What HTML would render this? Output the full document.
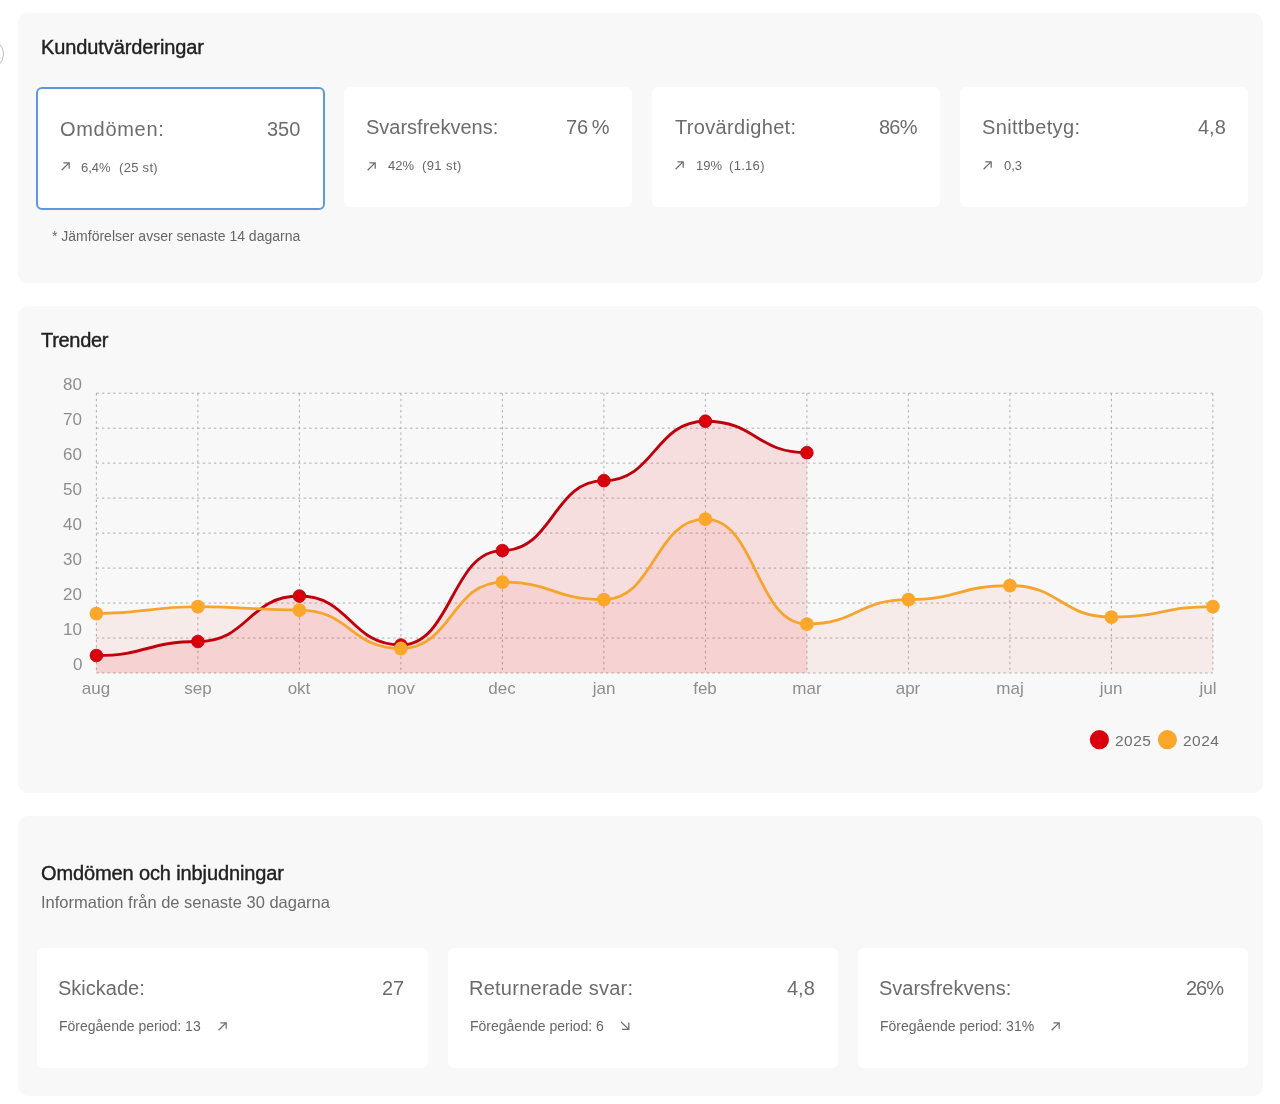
<!DOCTYPE html>
<html><head><meta charset="utf-8">
<style>
html,body{margin:0;padding:0;background:#fff;}
body{width:1280px;height:1104px;overflow:hidden;position:relative;font-family:"Liberation Sans",sans-serif;}
.p{position:absolute;left:18px;width:1245px;background:#f8f8f8;border-radius:10px;}
.c{position:absolute;background:#fff;border-radius:6px;box-sizing:border-box;}
.t{position:absolute;white-space:nowrap;line-height:1;will-change:transform;}
.h{font-size:20px;color:#212121;left:40.8px;-webkit-text-stroke:0.4px #212121;}
.ti{font-size:20px;color:#6c6c6c;}
.va{font-size:20px;color:#6c6c6c;text-align:right;}
.s{font-size:13px;color:#666;}
.s2{font-size:14px;color:#666;}
.ar{position:absolute;}
.chart{position:absolute;left:0;top:0;}
.xl{position:absolute;will-change:transform;top:679.5px;width:80px;text-align:center;font-size:17px;line-height:1;color:#8e8e8e;}
.yl{position:absolute;will-change:transform;right:1197.6px;font-size:17px;line-height:1;color:#8e8e8e;text-align:right;}
.lg{position:absolute;will-change:transform;top:733.3px;font-size:15.5px;letter-spacing:0.45px;line-height:1;color:#6e6e6e;}
.circ{position:absolute;left:-28.3px;top:38.3px;width:32px;height:32px;border:1.2px solid #c0c0c0;border-radius:50%;box-sizing:border-box;}
</style></head><body>
<div class="circ"></div>
<!-- panel 1 -->
<div class="p" style="top:13px;height:270px"></div>
<div class="t h" style="top:37.3px;letter-spacing:-0.1px">Kundutvärderingar</div>
<div class="c" style="left:36px;top:87px;width:288.7px;height:122.7px;border:2px solid #5e97dd"></div>
<div class="c" style="left:344px;top:87px;width:288px;height:119.7px"></div>
<div class="c" style="left:652px;top:87px;width:288px;height:119.7px"></div>
<div class="c" style="left:960px;top:87px;width:288px;height:119.7px"></div>

<div class="t ti" style="left:60px;top:118.9px;letter-spacing:0.7px">Omdömen:</div>
<div class="t va" style="right:979.6px;top:118.9px">350</div>
<div class="t ti" style="left:366px;top:117.4px">Svarsfrekvens:</div>
<div class="t va" style="right:670.3px;top:117.4px;word-spacing:-2px">76 %</div>
<div class="t ti" style="left:674.5px;top:117.4px;letter-spacing:0.33px">Trovärdighet:</div>
<div class="t va" style="right:363.5px;top:117.4px;letter-spacing:-0.8px">86%</div>
<div class="t ti" style="left:982px;top:117.4px;letter-spacing:0.35px">Snittbetyg:</div>
<div class="t va" style="right:54.7px;top:117.4px">4,8</div>

<div class="ar" style="left:59.8px;top:161.3px"><svg class="ar" width="12" height="12" viewBox="0 0 12 12"><path d="M1.6 9.2 L9.0 1.9 M3.4 1.75 H9.2 V7.8" fill="none" stroke="#6e6e6e" stroke-width="1.25"/></svg></div>
<div class="t s" style="left:81.3px;top:160.5px">6,4%</div>
<div class="t s" style="left:119.3px;top:160.5px;letter-spacing:0.3px">(25 st)</div>
<div class="ar" style="left:366.4px;top:160.7px"><svg class="ar" width="12" height="12" viewBox="0 0 12 12"><path d="M1.6 9.2 L9.0 1.9 M3.4 1.75 H9.2 V7.8" fill="none" stroke="#6e6e6e" stroke-width="1.25"/></svg></div>
<div class="t s" style="left:387.5px;top:159.1px">42%</div>
<div class="t s" style="left:421.8px;top:159.1px;letter-spacing:0.4px">(91 st)</div>
<div class="ar" style="left:673.8px;top:160.3px"><svg class="ar" width="12" height="12" viewBox="0 0 12 12"><path d="M1.6 9.2 L9.0 1.9 M3.4 1.75 H9.2 V7.8" fill="none" stroke="#6e6e6e" stroke-width="1.25"/></svg></div>
<div class="t s" style="left:695.5px;top:159.1px">19%</div>
<div class="t s" style="left:729px;top:159.1px;letter-spacing:0.3px">(1.16)</div>
<div class="ar" style="left:981.8px;top:160.3px"><svg class="ar" width="12" height="12" viewBox="0 0 12 12"><path d="M1.6 9.2 L9.0 1.9 M3.4 1.75 H9.2 V7.8" fill="none" stroke="#6e6e6e" stroke-width="1.25"/></svg></div>
<div class="t s" style="left:1003.5px;top:159.1px">0,3</div>

<div class="t s2" style="left:51.8px;top:228.75px">* Jämförelser avser senaste 14 dagarna</div>

<!-- panel 2 -->
<div class="p" style="top:305.5px;height:487.2px"></div>
<div class="t h" style="top:330px;left:40.8px;letter-spacing:-0.3px">Trender</div>
<svg class="chart" width="1280" height="1104" viewBox="0 0 1280 1104">
<g stroke="#adadad" stroke-width="1" stroke-dasharray="2.4 3.2" fill="none"><line x1="96.40" y1="393.20" x2="1212.90" y2="393.20"/><line x1="96.40" y1="428.18" x2="1212.90" y2="428.18"/><line x1="96.40" y1="463.15" x2="1212.90" y2="463.15"/><line x1="96.40" y1="498.12" x2="1212.90" y2="498.12"/><line x1="96.40" y1="533.10" x2="1212.90" y2="533.10"/><line x1="96.40" y1="568.08" x2="1212.90" y2="568.08"/><line x1="96.40" y1="603.05" x2="1212.90" y2="603.05"/><line x1="96.40" y1="638.02" x2="1212.90" y2="638.02"/><line x1="96.40" y1="673.00" x2="1212.90" y2="673.00"/><line x1="96.40" y1="393.20" x2="96.40" y2="673.00"/><line x1="197.90" y1="393.20" x2="197.90" y2="673.00"/><line x1="299.40" y1="393.20" x2="299.40" y2="673.00"/><line x1="400.90" y1="393.20" x2="400.90" y2="673.00"/><line x1="502.40" y1="393.20" x2="502.40" y2="673.00"/><line x1="603.90" y1="393.20" x2="603.90" y2="673.00"/><line x1="705.40" y1="393.20" x2="705.40" y2="673.00"/><line x1="806.90" y1="393.20" x2="806.90" y2="673.00"/><line x1="908.40" y1="393.20" x2="908.40" y2="673.00"/><line x1="1009.90" y1="393.20" x2="1009.90" y2="673.00"/><line x1="1111.40" y1="393.20" x2="1111.40" y2="673.00"/><line x1="1212.90" y1="393.20" x2="1212.90" y2="673.00"/></g>
<path d="M96.40 613.54 C147.15 613.54 147.15 606.55 197.90 606.55 C248.65 606.55 248.65 610.04 299.40 610.04 C350.15 610.04 350.15 648.52 400.90 648.52 C451.65 648.52 451.65 582.07 502.40 582.07 C553.15 582.07 553.15 599.55 603.90 599.55 C654.65 599.55 654.65 519.11 705.40 519.11 C756.15 519.11 756.15 624.03 806.90 624.03 C857.65 624.03 857.65 599.55 908.40 599.55 C959.15 599.55 959.15 585.56 1009.90 585.56 C1060.65 585.56 1060.65 617.04 1111.40 617.04 C1162.15 617.04 1162.15 606.55 1212.90 606.55 L1212.90 673.00 L96.40 673.00 Z" fill="rgba(240,40,0,0.06)"/>
<path d="M96.40 655.51 C147.15 655.51 147.15 641.52 197.90 641.52 C248.65 641.52 248.65 596.05 299.40 596.05 C350.15 596.05 350.15 645.02 400.90 645.02 C451.65 645.02 451.65 550.59 502.40 550.59 C553.15 550.59 553.15 480.64 603.90 480.64 C654.65 480.64 654.65 421.18 705.40 421.18 C756.15 421.18 756.15 452.66 806.90 452.66 L806.90 673.00 L96.40 673.00 Z" fill="rgba(235,0,0,0.1)"/>
<path d="M96.40 655.51 C147.15 655.51 147.15 641.52 197.90 641.52 C248.65 641.52 248.65 596.05 299.40 596.05 C350.15 596.05 350.15 645.02 400.90 645.02 C451.65 645.02 451.65 550.59 502.40 550.59 C553.15 550.59 553.15 480.64 603.90 480.64 C654.65 480.64 654.65 421.18 705.40 421.18 C756.15 421.18 756.15 452.66 806.90 452.66" fill="none" stroke="#bf000c" stroke-width="2.9"/>
<g fill="#d9000b" stroke="#bb000f" stroke-width="0.8"><circle cx="96.40" cy="655.51" r="6.35"/><circle cx="197.90" cy="641.52" r="6.35"/><circle cx="299.40" cy="596.05" r="6.35"/><circle cx="400.90" cy="645.02" r="6.35"/><circle cx="502.40" cy="550.59" r="6.35"/><circle cx="603.90" cy="480.64" r="6.35"/><circle cx="705.40" cy="421.18" r="6.35"/><circle cx="806.90" cy="452.66" r="6.35"/></g>
<path d="M96.40 613.54 C147.15 613.54 147.15 606.55 197.90 606.55 C248.65 606.55 248.65 610.04 299.40 610.04 C350.15 610.04 350.15 648.52 400.90 648.52 C451.65 648.52 451.65 582.07 502.40 582.07 C553.15 582.07 553.15 599.55 603.90 599.55 C654.65 599.55 654.65 519.11 705.40 519.11 C756.15 519.11 756.15 624.03 806.90 624.03 C857.65 624.03 857.65 599.55 908.40 599.55 C959.15 599.55 959.15 585.56 1009.90 585.56 C1060.65 585.56 1060.65 617.04 1111.40 617.04 C1162.15 617.04 1162.15 606.55 1212.90 606.55" fill="none" stroke="#f5a42e" stroke-width="2.8"/>
<g fill="#fba72c"><circle cx="96.40" cy="613.54" r="6.9"/><circle cx="197.90" cy="606.55" r="6.9"/><circle cx="299.40" cy="610.04" r="6.9"/><circle cx="400.90" cy="648.52" r="6.9"/><circle cx="502.40" cy="582.07" r="6.9"/><circle cx="603.90" cy="599.55" r="6.9"/><circle cx="705.40" cy="519.11" r="6.9"/><circle cx="806.90" cy="624.03" r="6.9"/><circle cx="908.40" cy="599.55" r="6.9"/><circle cx="1009.90" cy="585.56" r="6.9"/><circle cx="1111.40" cy="617.04" r="6.9"/><circle cx="1212.90" cy="606.55" r="6.9"/></g>
<circle cx="1099.4" cy="739.7" r="9.6" fill="#d9000b"/>
<circle cx="1167.4" cy="739.7" r="9.6" fill="#fba72c"/>
</svg>
<div class="xl" style="left:56.4px">aug</div><div class="xl" style="left:157.9px">sep</div><div class="xl" style="left:259.4px">okt</div><div class="xl" style="left:360.9px">nov</div><div class="xl" style="left:462.4px">dec</div><div class="xl" style="left:563.9px">jan</div><div class="xl" style="left:665.4px">feb</div><div class="xl" style="left:766.9px">mar</div><div class="xl" style="left:868.4px">apr</div><div class="xl" style="left:969.9px">maj</div><div class="xl" style="left:1071.4px">jun</div><div class="xl" style="left:1167.9px">jul</div>
<div class="yl" style="top:375.9px">80</div><div class="yl" style="top:410.8px">70</div><div class="yl" style="top:445.8px">60</div><div class="yl" style="top:480.8px">50</div><div class="yl" style="top:515.8px">40</div><div class="yl" style="top:550.7px">30</div><div class="yl" style="top:585.7px">20</div><div class="yl" style="top:620.7px">10</div><div class="yl" style="top:655.7px">0</div>
<div class="lg" style="left:1115.1px">2025</div>
<div class="lg" style="left:1183.2px">2024</div>

<!-- panel 3 -->
<div class="p" style="top:816px;height:280px"></div>
<div class="t h" style="top:862.7px;left:41px;letter-spacing:-0.12px">Omdömen och inbjudningar</div>
<div class="t" style="top:893.7px;left:40.5px;font-size:16.5px;color:#6c6c6c">Information från de senaste 30 dagarna</div>
<div class="c" style="left:37px;top:947.5px;width:390.5px;height:120px"></div>
<div class="c" style="left:447.5px;top:947.5px;width:390px;height:120px"></div>
<div class="c" style="left:857.5px;top:947.5px;width:390px;height:120px"></div>

<div class="t ti" style="left:58.3px;top:977.7px">Skickade:</div>
<div class="t va" style="right:875.7px;top:977.7px">27</div>
<div class="t ti" style="left:468.5px;top:977.7px;letter-spacing:0.25px">Returnerade svar:</div>
<div class="t va" style="right:465.7px;top:977.7px">4,8</div>
<div class="t ti" style="left:879.2px;top:977.7px">Svarsfrekvens:</div>
<div class="t va" style="right:57.2px;top:977.7px;letter-spacing:-1px">26%</div>

<div class="t s2" style="left:58.8px;top:1018.9px">Föregående period: 13</div>
<div class="ar" style="left:217.3px;top:1020.8px"><svg class="ar" width="12" height="12" viewBox="0 0 12 12"><path d="M1.6 9.2 L9.0 1.9 M3.4 1.75 H9.2 V7.8" fill="none" stroke="#6e6e6e" stroke-width="1.25"/></svg></div>
<div class="t s2" style="left:469.6px;top:1018.9px">Föregående period: 6</div>
<div class="ar" style="left:620.4px;top:1021.4px"><svg class="ar" width="12" height="12" viewBox="0 0 12 12"><path d="M1.0 1.0 L8.3 7.9 M2.0 8.3 H8.8 V1.6" fill="none" stroke="#6e6e6e" stroke-width="1.25"/></svg></div>
<div class="t s2" style="left:879.6px;top:1018.9px">Föregående period: 31%</div>
<div class="ar" style="left:1049.5px;top:1021px"><svg class="ar" width="12" height="12" viewBox="0 0 12 12"><path d="M1.6 9.2 L9.0 1.9 M3.4 1.75 H9.2 V7.8" fill="none" stroke="#6e6e6e" stroke-width="1.25"/></svg></div>
</body></html>
